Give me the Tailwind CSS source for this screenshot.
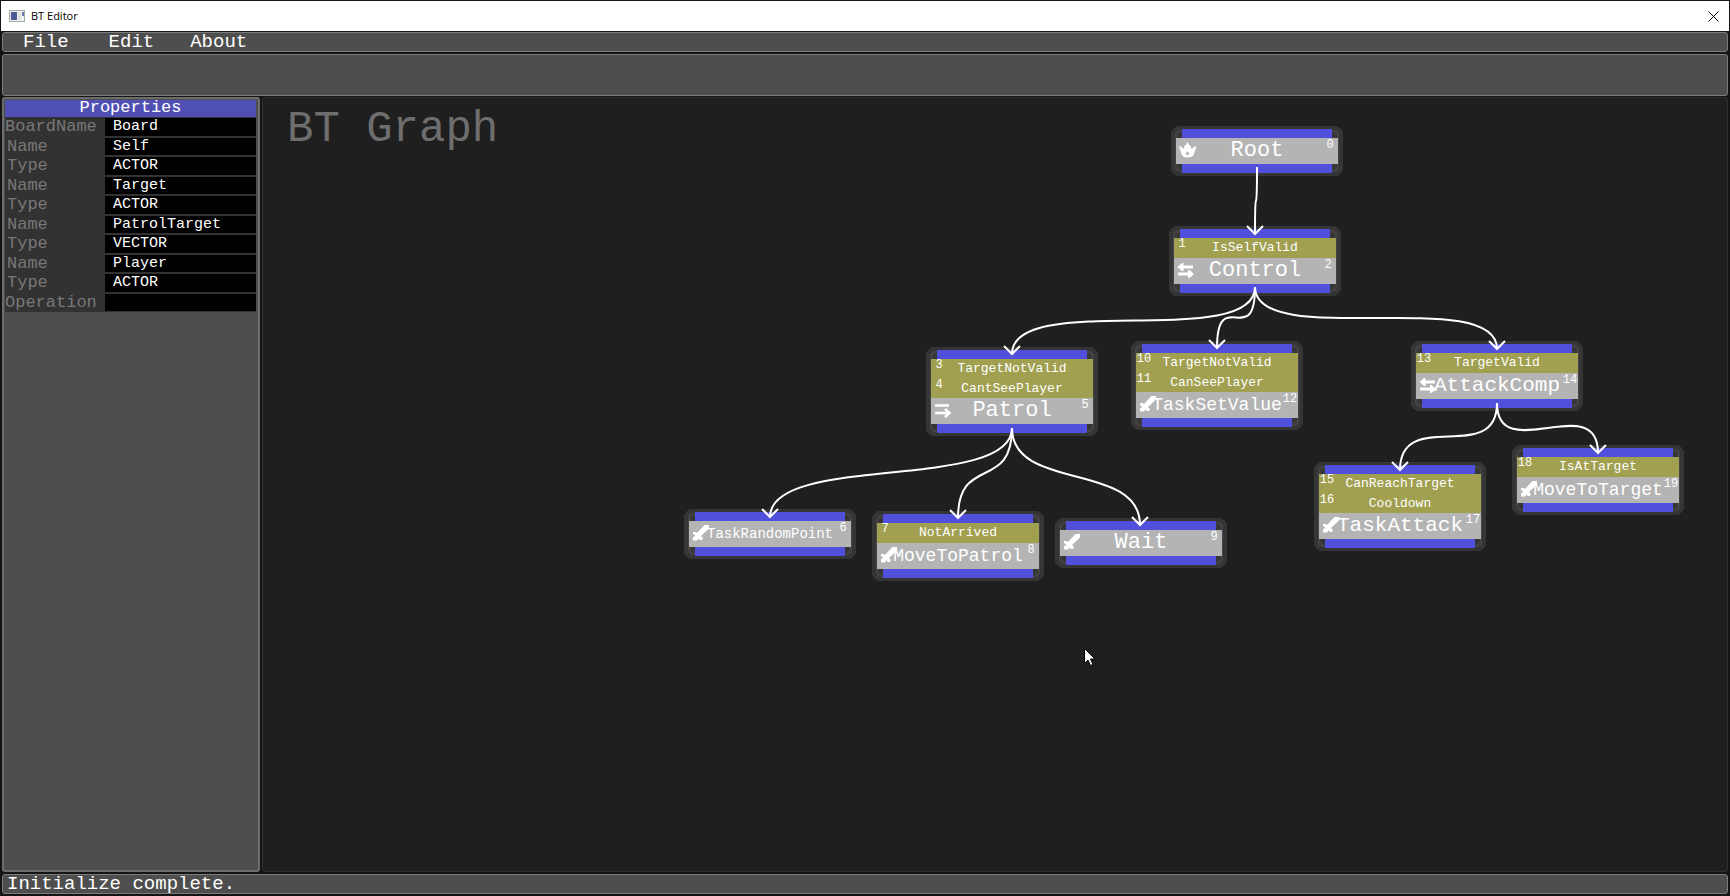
<!DOCTYPE html>
<html lang="en">
<head>
<meta charset="utf-8">
<title>BT Editor</title>
<script src="https://cdn.jsdelivr.net/npm/@tailwindcss/browser@4"></script>
</head>
<body class="bg-[#141414]">
<svg class="hidden" aria-hidden="true">
  <symbol id="crown" viewBox="0 0 18 16">
    <path fill="white" fill-rule="evenodd" d="M0.500 4 Q0 6 1 7.500 L3 13 Q4 15.500 8.500 15.500 Q13.500 15.500 14.500 13 L16.500 7.500 Q17.500 6 17 4 L15 5 L12.500 7 L11.500 3.500 L10 3 L9 0.500 H8 L7 3 L5.500 3.500 L4.800 7 L2.500 5 Z M8.500 9.500 L10.500 11.500 L8.500 13.500 L6.500 11.500 Z"/>
  </symbol>
  <symbol id="swap" viewBox="0 0 18 16">
    <path fill="none" stroke="white" stroke-width="2.800" d="M3 5 H16 M1 12 H14"/>
    <path fill="white" d="M0.500 5 L5 1 H6.500 V9 H5 Z M17 12 L12.500 8 H11 V16 H12.500 Z"/>
  </symbol>
  <symbol id="sequence" viewBox="0 0 18 16">
    <path fill="none" stroke="white" stroke-width="2.500" d="M1 3.500 H15 M1 11 H15 M11 7 L15.500 11 L11 15"/>
  </symbol>
  <symbol id="sword" viewBox="0 0 18 16">
    <path fill="white" d="M12.500 0 H17 V3.500 L9 11 L11 13 L10 15 H8 L6.500 13.500 L5 15.500 H1 V12 L3.500 11 L1 9 V7 H4 L5 8 Z"/>
  </symbol>
</svg>

<div class="flex h-screen flex-col border border-b-2 border-[#141414] font-['Liberation_Mono',monospace] text-white">
  <header class="flex h-[30px] shrink-0 items-center gap-1.5 bg-white px-2 font-['Open_Sans','Noto_Sans',sans-serif] text-black">
    <svg class="h-3 w-4" viewBox="0 0 16 12" aria-hidden="true">
      <rect x="0.500" y="0.500" width="15" height="11" fill="#f4f4f4" stroke="#a8a8a8"/>
      <rect x="2" y="2" width="6" height="8" fill="#4d5b93"/>
      <rect x="9" y="2" width="3" height="8" fill="#dfe4df"/>
      <rect x="13" y="2" width="2" height="4" fill="#6b78a8"/>
    </svg>
    <h1 class="text-[11px]">BT Editor</h1>
    <button class="ml-auto flex p-0.5" aria-label="Close">
      <svg class="size-[11px]" viewBox="0 0 11 11"><path d="M0.500 0.500 L10.500 10.500 M10.500 0.500 L0.500 10.500" stroke="black" fill="none"/></svg>
    </button>
  </header>

  <nav class="mx-px mt-px flex h-5 shrink-0 items-start gap-10 rounded-[3px] border border-[#7c7c7c] bg-[#4e4e4e] pl-5 text-[19px] leading-[18px]">
    <button>File</button>
    <button>Edit</button>
    <button class="-ml-1">About</button>
  </nav>
  <div class="mx-px mt-0.5 h-[42px] shrink-0 rounded-[3px] border border-[#7c7c7c] bg-[#4e4e4e]"></div>

  <div class="mt-px flex min-h-0 flex-1 gap-0.5 px-px">
    <aside class="w-[258px] shrink-0 rounded-[3px] border-2 border-[#6c6c6c] bg-[#4e4e4e] py-px pr-0.5 pl-px">
      <h2 class="h-[17px] bg-[#5050b4] text-center text-[17px] leading-4">Properties</h2>
      <form class="grid h-[195px] auto-rows-fr grid-cols-1 bg-[#323232]">
        <div class="flex pt-px"><label for="p0" class="w-[100px] shrink-0 text-[17px] leading-[18px] text-[#787878]">BoardName</label><input id="p0" value="Board" class="w-0 min-w-0 flex-1 border-b border-[#323232] bg-black px-2 pt-px text-[15px]"></div>
        <div class="flex pt-px"><label for="p1" class="w-[100px] shrink-0 pl-0.5 text-[17px] leading-[18px] text-[#787878]">Name</label><input id="p1" value="Self" class="w-0 min-w-0 flex-1 border-b border-[#323232] bg-black px-2 pt-px text-[15px]"></div>
        <div class="flex pt-px"><label for="p2" class="w-[100px] shrink-0 pl-0.5 text-[17px] leading-[18px] text-[#787878]">Type</label><input id="p2" value="ACTOR" class="w-0 min-w-0 flex-1 border-b border-[#323232] bg-black px-2 pt-px text-[15px]"></div>
        <div class="flex pt-px"><label for="p3" class="w-[100px] shrink-0 pl-0.5 text-[17px] leading-[18px] text-[#787878]">Name</label><input id="p3" value="Target" class="w-0 min-w-0 flex-1 border-b border-[#323232] bg-black px-2 pt-px text-[15px]"></div>
        <div class="flex pt-px"><label for="p4" class="w-[100px] shrink-0 pl-0.5 text-[17px] leading-[18px] text-[#787878]">Type</label><input id="p4" value="ACTOR" class="w-0 min-w-0 flex-1 border-b border-[#323232] bg-black px-2 pt-px text-[15px]"></div>
        <div class="flex pt-px"><label for="p5" class="w-[100px] shrink-0 pl-0.5 text-[17px] leading-[18px] text-[#787878]">Name</label><input id="p5" value="PatrolTarget" class="w-0 min-w-0 flex-1 border-b border-[#323232] bg-black px-2 pt-px text-[15px]"></div>
        <div class="flex pt-px"><label for="p6" class="w-[100px] shrink-0 pl-0.5 text-[17px] leading-[18px] text-[#787878]">Type</label><input id="p6" value="VECTOR" class="w-0 min-w-0 flex-1 border-b border-[#323232] bg-black px-2 pt-px text-[15px]"></div>
        <div class="flex pt-px"><label for="p7" class="w-[100px] shrink-0 pl-0.5 text-[17px] leading-[18px] text-[#787878]">Name</label><input id="p7" value="Player" class="w-0 min-w-0 flex-1 border-b border-[#323232] bg-black px-2 pt-px text-[15px]"></div>
        <div class="flex pt-px"><label for="p8" class="w-[100px] shrink-0 pl-0.5 text-[17px] leading-[18px] text-[#787878]">Type</label><input id="p8" value="ACTOR" class="w-0 min-w-0 flex-1 border-b border-[#323232] bg-black px-2 pt-px text-[15px]"></div>
        <div class="flex pt-px"><label for="p9" class="w-[100px] shrink-0 text-[17px] leading-[18px] text-[#787878]">Operation</label><input id="p9" value="" class="w-0 min-w-0 flex-1 border-b border-[#323232] bg-black px-2 pt-px text-[15px]"></div>
      </form>
    </aside>

    <main class="min-w-0 flex-1 rounded-[3px] border border-[#2e2e2e] bg-[#1f1f1f]">
      <div id="canvas" class="relative h-full overflow-hidden">
        <h2 class="pt-1.5 pl-6 text-[44px] leading-[50px] text-[#6e6e6e]">BT Graph</h2>
        <div id="nodes"></div>
        <svg class="pointer-events-none absolute inset-0 size-full" aria-hidden="true">
          <g id="edges" fill="none" stroke="white" stroke-width="2"></g>
          <path transform="translate(821 550)" fill="white" stroke="black" d="M0.500 0.500 V15.500 L4 12 L6.500 17.500 L9 16.500 L6.500 11 H11 Z"/>
        </svg>
      </div>
    </main>
  </div>

  <footer class="mx-px mt-0.5 h-5 shrink-0 rounded-[3px] border border-[#7c7c7c] bg-[#4e4e4e] pl-1 text-[19px] leading-[18px]">Initialize complete.</footer>
</div>

<script>
  // Canvas origin in window coordinates
  const OX = 263, OY = 98;
  // [left, top, icon, title, title size class, index, decorators [index, name]]
  const BIG = 'text-[22px]', MID = 'text-[21px]', SMALL = 'text-[18px]', TINY = 'text-[14px]';
  const nodes = [
    [1171, 126, 'crown', 'Root', BIG, 0, []],
    [1169, 226, 'swap', 'Control', BIG, 2, [[1, 'IsSelfValid']]],
    [926, 347, 'sequence', 'Patrol', BIG, 5, [[3, 'TargetNotValid'], [4, 'CantSeePlayer']]],
    [1131, 341, 'sword', 'TaskSetValue', SMALL, 12, [[10, 'TargetNotValid'], [11, 'CanSeePlayer']]],
    [1411, 341, 'swap', 'AttackComp', MID, 14, [[13, 'TargetValid']]],
    [1314, 462, 'sword', 'TaskAttack', MID, 17, [[15, 'CanReachTarget'], [16, 'Cooldown']]],
    [1512, 445, 'sword', 'MoveToTarget', SMALL, 19, [[18, 'IsAtTarget']]],
    [684, 509, 'sword', 'TaskRandomPoint', TINY, 6, []],
    [872, 511, 'sword', 'MoveToPatrol', SMALL, 8, [[7, 'NotArrived']]],
    [1055, 518, 'sword', 'Wait', BIG, 9, []],
  ];
  document.getElementById('nodes').innerHTML = nodes.map(([x, y, icon, title, size, index, decorators]) => `
    <article class="absolute flex w-[172px] flex-col rounded-[9px] bg-[#353535] px-[5px] py-[3px] inset-shadow-[0_0_0_4px_#353535,0_0_3px_6px_#484848]" style="left:${x - OX}px;top:${y - OY}px">
      <div class="mx-1.5 h-[9px] bg-[#5050dc]"></div>
      ${decorators.map(([n, name]) => `
      <div class="relative h-5 bg-[#a0a050] text-center text-[13px] leading-5 nth-3:h-[19px]">
        <span class="absolute top-0 left-0 flex w-4 justify-center text-[12px] leading-3">${n}</span>${name}
      </div>`).join('')}
      <div class="relative h-[26px] bg-[#b4b4b4] text-center leading-[26px] ${size}">
        <svg class="absolute top-1 left-[3px] h-4 w-[18px]"><use href="#${icon}"/></svg>${title}
        <span class="absolute top-px right-0 flex w-4 justify-center text-[12px] leading-3">${index}</span>
      </div>
      <div class="mx-1.5 h-[9px] bg-[#5050dc]"></div>
    </article>`).join('');

  const H = 64;
  const edges = [
    [1257, 167, 1255, 234], [1255, 287, 1012, 354], [1255, 287, 1217, 348], [1255, 287, 1497, 349],
    [1012, 428, 770, 517], [1012, 428, 958, 518], [1012, 428, 1140, 525],
    [1497, 403, 1400, 470], [1497, 403, 1598, 453],
  ];
  document.getElementById('edges').innerHTML = edges.map(([a, b, c, d]) => {
    const x0 = a - OX, y0 = b - OY, x1 = c - OX, y1 = d - OY;
    return `<path d="M${x0} ${y0} C${x0} ${y0 + H} ${x1} ${y1 - H} ${x1} ${y1} M${x1 - 8} ${y1 - 8} L${x1} ${y1} L${x1 + 8} ${y1 - 8}"/>`;
  }).join('');
</script>
</body>
</html>
